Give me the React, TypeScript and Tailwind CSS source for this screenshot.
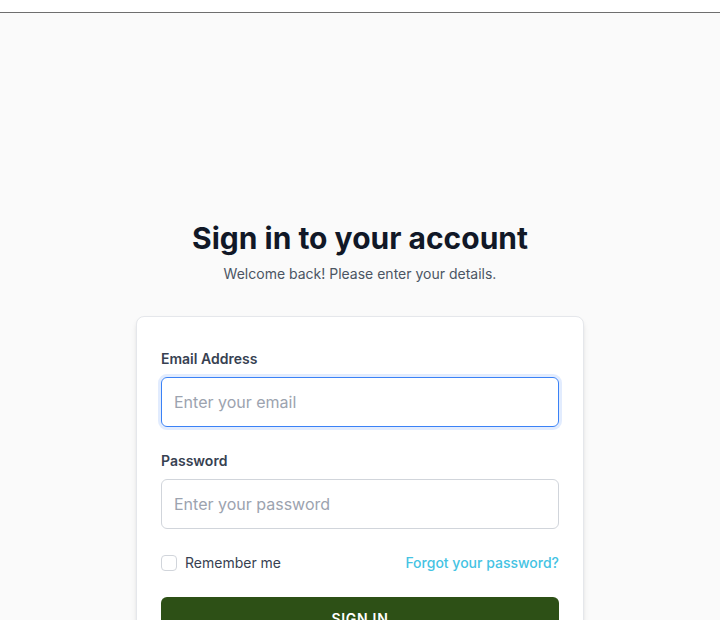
import React from "react";

export default function App() {
  return (
    <div className="min-h-screen bg-[#fafafa]" style={{ fontFamily: "Inter, 'Noto Sans', sans-serif" }}>
      <div className="h-[13px] bg-white border-b border-[#6e6e6e]" />
      <div className="flex flex-col items-center pt-[207px]">
        <h1 className="text-3xl font-bold text-[#111827]">Sign in to your account</h1>
        <p className="mt-2 text-sm text-[#4b5563]">Welcome back! Please enter your details.</p>
        <div className="mt-8 w-[448px] bg-white border border-[#e5e7eb] rounded-lg shadow-md px-6 py-8">
          <div className="flex flex-col gap-6">
            <div>
              <label className="block text-sm font-semibold text-[#374151] mb-2">Email Address</label>
              <input
                type="email"
                placeholder="Enter your email"
                className="block w-full h-[50px] px-3 text-base rounded-md border border-[#3b82f6] ring-3 ring-[#3b82f6]/15 outline-none placeholder:text-[#9ca3af] text-[#111827]"
              />
            </div>
            <div>
              <label className="block text-sm font-semibold text-[#374151] mb-2">Password</label>
              <input
                type="password"
                placeholder="Enter your password"
                className="block w-full h-[50px] px-3 text-base rounded-md border border-[#d1d5db] outline-none placeholder:text-[#9ca3af] text-[#111827]"
              />
            </div>
            <div className="flex items-center justify-between h-5">
              <label className="flex items-center text-sm text-[#374151]">
                <span className="w-4 h-4 rounded border border-[#d1d5db] bg-white inline-block" />
                <span className="ml-2">Remember me</span>
              </label>
              <a className="text-sm text-[#45c3e3] font-medium">Forgot your password?</a>
            </div>
            <button className="w-full h-11 rounded-md bg-[#2d5016] text-white text-sm font-semibold uppercase tracking-wider">
              Sign in
            </button>
          </div>
        </div>
      </div>
    </div>
  );
}
